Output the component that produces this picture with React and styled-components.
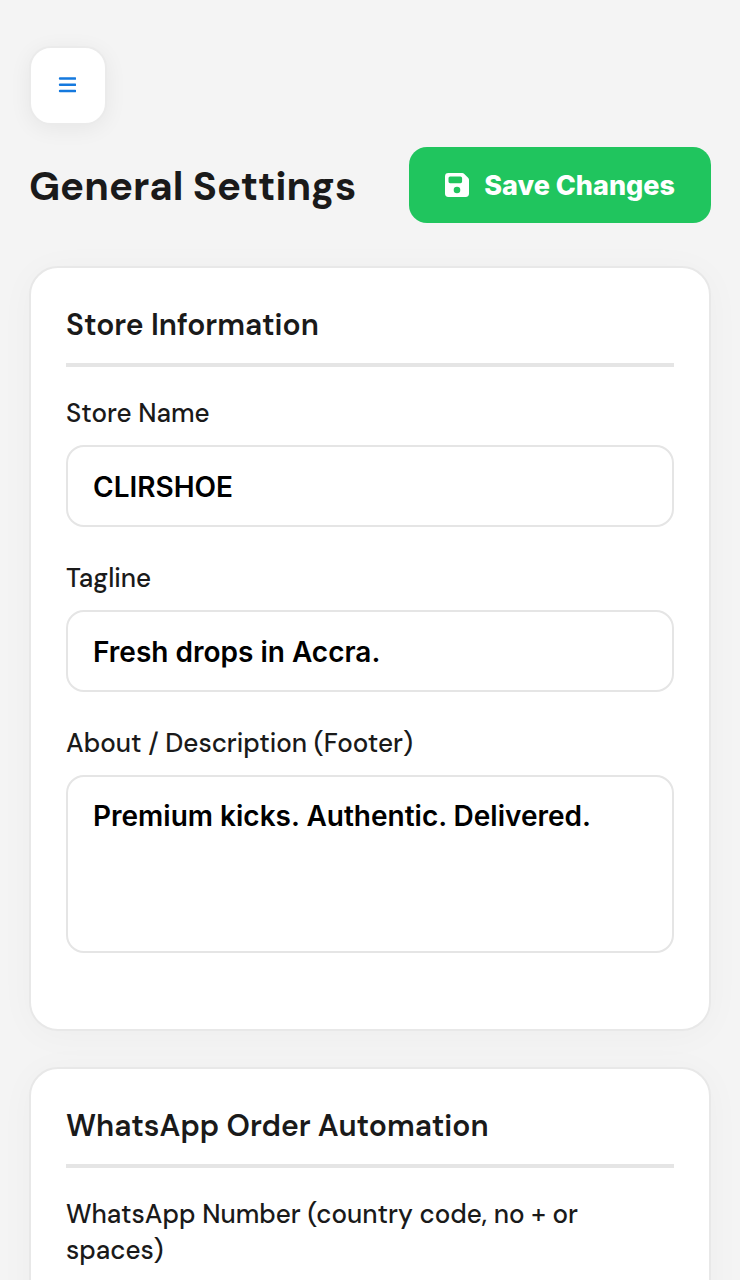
import React, { useState } from "react";
import styled, { createGlobalStyle } from "styled-components";

function MenuIcon() {
  return (
    <svg width="18" height="18" viewBox="0 0 18 18" aria-hidden="true">
      <path
        d="M2 2.5h15.2M2 8.8h15.2M2 15h15.2"
        stroke="#1579de"
        strokeWidth="2.4"
        strokeLinecap="round"
      />
    </svg>
  );
}

function SaveIcon() {
  return (
    <svg width="24" height="24" viewBox="0 0 24 24" aria-hidden="true">
      <path
        fill="#fff"
        fillRule="evenodd"
        d="M3.4 0H17.2a3 3 0 0 1 2.1.9l3.8 3.8a3 3 0 0 1 .9 2.1V20.6a3.4 3.4 0 0 1-3.4 3.4H3.4A3.4 3.4 0 0 1 0 20.6V3.4A3.4 3.4 0 0 1 3.4 0ZM5.1 3.6a1.6 1.6 0 0 0-1.6 1.6v3.4a1.6 1.6 0 0 0 1.6 1.6H15.5a1.6 1.6 0 0 0 1.6-1.6V5.2a1.6 1.6 0 0 0-1.6-1.6ZM12 13.7a3.3 3.3 0 1 0 0 6.6a3.3 3.3 0 1 0 0-6.6Z"
      />
    </svg>
  );
}

export default function App() {
  const [settings, setSettings] = useState({
    storeName: "CLIRSHOE",
    tagline: "Fresh drops in Accra.",
    about: "Premium kicks. Authentic. Delivered.",
    whatsapp: "",
  });

  const handleChange = (e) => {
    const { name, value } = e.target;
    setSettings((prev) => ({ ...prev, [name]: value }));
  };

  return (
    <>
      <GlobalStyle />
      <Page>
        <MenuButton type="button" aria-label="Open menu">
          <MenuIcon />
        </MenuButton>
        <Header>
          <Title>General Settings</Title>
          <SaveButton type="submit" form="settings">
            <SaveIcon />
            Save Changes
          </SaveButton>
        </Header>
        <Form id="settings" onSubmit={(e) => e.preventDefault()}>
          <Card>
            <CardTitle>Store Information</CardTitle>
            <Field>
              <Label htmlFor="storeName">Store Name</Label>
              <Input
                id="storeName"
                name="storeName"
                value={settings.storeName}
                onChange={handleChange}
              />
            </Field>
            <Field>
              <Label htmlFor="tagline">Tagline</Label>
              <Input
                id="tagline"
                name="tagline"
                value={settings.tagline}
                onChange={handleChange}
              />
            </Field>
            <Field>
              <Label htmlFor="about">About / Description (Footer)</Label>
              <TextArea
                id="about"
                name="about"
                rows={4}
                value={settings.about}
                onChange={handleChange}
              />
            </Field>
          </Card>
          <Card>
            <CardTitle>WhatsApp Order Automation</CardTitle>
            <Field>
              <Label htmlFor="whatsapp">
                WhatsApp Number (country code, no + or spaces)
              </Label>
              <Input
                id="whatsapp"
                name="whatsapp"
                type="tel"
                value={settings.whatsapp}
                onChange={handleChange}
              />
            </Field>
          </Card>
        </Form>
      </Page>
    </>
  );
}

const GlobalStyle = createGlobalStyle`
  * {
    box-sizing: border-box;
  }
  html {
    scrollbar-width: none;
  }
  body {
    margin: 0;
    background: #f4f4f4;
    color: #1a1a1a;
    font-family: "DM Sans", Inter, "Liberation Sans", sans-serif;
  }
`;

const Page = styled.main`
  padding: 46px 29px;
`;

const MenuButton = styled.button`
  display: flex;
  align-items: center;
  justify-content: center;
  width: 78px;
  height: 79px;
  padding: 0 2px 2px 0;
  border: 2px solid #ebebeb;
  border-radius: 22px;
  background: #fff;
  box-shadow: 0 4px 22px rgba(0, 0, 0, 0.06);
  cursor: pointer;
`;

const Header = styled.header`
  display: flex;
  align-items: center;
  justify-content: space-between;
  margin: 22px 0 43px;
`;

const Title = styled.h1`
  margin: 0;
  padding-top: 2px;
  font-size: 40px;
  line-height: 52px;
  font-weight: 700;
`;

const SaveButton = styled.button`
  display: flex;
  align-items: center;
  gap: 15px;
  height: 76px;
  padding: 0 36px;
  border: 0;
  border-radius: 18px;
  background: #20c55e;
  color: #fff;
  font-family: Inter, sans-serif;
  font-size: 27px;
  font-weight: 800;
  white-space: nowrap;
  cursor: pointer;
`;

const Form = styled.form`
  display: flex;
  flex-direction: column;
  gap: 36px;
`;

const Card = styled.section`
  display: flex;
  flex-direction: column;
  padding: 36px 35px 43px;
  border: 2px solid #e8e8e8;
  border-radius: 29px;
  background: #fff;
  box-shadow: 0 4px 36px rgba(0, 0, 0, 0.03);
`;

const CardTitle = styled.h2`
  margin: 0 0 28px;
  padding-bottom: 17px;
  border-bottom: 4px solid #e5e5e5;
  font-size: 30px;
  line-height: 42px;
  font-weight: 600;
`;

const Field = styled.div`
  display: flex;
  flex-direction: column;
  gap: 14px;
  margin-bottom: 33px;
`;

const Label = styled.label`
  font-size: 26px;
  line-height: 36px;
  font-weight: 500;
`;

const Input = styled.input`
  width: 100%;
  height: 82px;
  padding: 2px 25px 0;
  border: 2px solid #e5e5e5;
  border-radius: 18px;
  background: #fff;
  color: #000;
  font-family: Inter, sans-serif;
  font-size: 28px;
  font-weight: 600;
`;

const TextArea = styled(Input).attrs({ as: "textarea" })`
  display: block;
  height: 178px;
  padding: 21px 25px;
  line-height: 36px;
  resize: none;
`;
